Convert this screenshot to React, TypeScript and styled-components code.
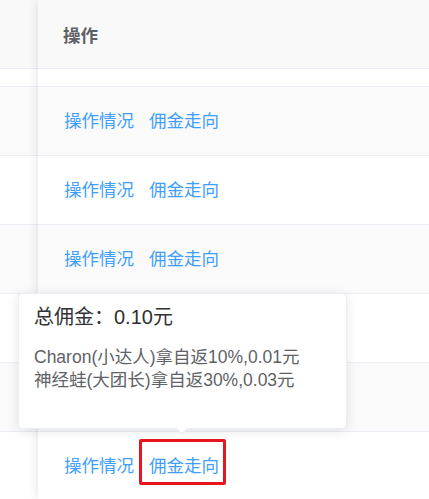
import React from "react";
import styled, { createGlobalStyle } from "styled-components";

const GlobalStyle = createGlobalStyle`
    body {
        margin: 0;
        background: #fff;
        font-family: "Liberation Sans", "Noto Sans CJK SC", sans-serif;
        overflow: hidden;
    }
`;

const TableBox = styled.div`
    display: flex;
    height: 499px;
    position: relative;
    overflow: hidden;
`;

const Pane = styled.div<{ fixed?: boolean }>`
    display: flex;
    flex-direction: column;
    width: ${p => p.fixed ? "auto" : "38px"};
    flex: ${p => p.fixed ? "1" : "none"};
    background: #fff;
    position: relative;
    z-index: ${p => p.fixed ? 1 : 0};
    box-shadow: ${p => p.fixed ? "0 0 10px rgba(0, 0, 0, 0.12)" : "none"};
`;

const HeadCell = styled.div`
    height: 68px;
    flex: none;
    display: flex;
    align-items: center;
    padding-left: 25px;
    background: #f9f9fa;
    border-bottom: 1px solid #e6ebf5;
    font-size: 17.5px;
    font-weight: bold;
    color: #5e6166;
`;

const GapRow = styled.div`
    height: 17px;
    flex: none;
    border-bottom: 1px solid #ebeef5;
`;

const Row = styled.div<{ striped?: boolean }>`
    height: 68px;
    flex: none;
    display: flex;
    align-items: center;
    padding-left: 26px;
    background: ${p => p.striped ? "#fafafa" : "#fff"};
    border-bottom: 1px solid #ebeef5;
`;

const LinkButton = styled.span<{ marked?: boolean }>`
    position: relative;
    font-size: 17.5px;
    line-height: 24px;
    color: #409eff;
    cursor: pointer;
    & + & {
        margin-left: 15px;
    }
    &::after {
        content: "";
        display: ${p => p.marked ? "block" : "none"};
        position: absolute;
        left: -10px;
        right: -7px;
        top: -15px;
        bottom: -7px;
        border: 3px solid #e8141f;
        border-radius: 2px;
    }
`;

const Popover = styled.div`
    position: absolute;
    left: 18px;
    top: 293px;
    width: 297px;
    height: 104px;
    padding: 10px 15px 20px 15px;
    background: #fff;
    border: 1px solid #ebeef5;
    border-radius: 4px;
    box-shadow: 0 2px 12px rgba(0, 0, 0, 0.1);
    z-index: 5;
    &::before {
        content: "";
        position: absolute;
        left: 157px;
        bottom: -7px;
        border-width: 6px 6px 0 6px;
        border-style: solid;
        border-color: #ebeef5 transparent transparent transparent;
    }
    &::after {
        content: "";
        position: absolute;
        left: 158px;
        bottom: -5px;
        border-width: 5px 5px 0 5px;
        border-style: solid;
        border-color: #fff transparent transparent transparent;
    }
`;

const PopTitle = styled.div`
    font-size: 20px;
    line-height: 26px;
    color: #303133;
    margin-bottom: 16px;
`;

const PopLine = styled.div`
    font-size: 17.5px;
    line-height: 23px;
    color: #606266;
`;

const rowCount = 6;

export default function App() {
    const leftRows = [];
    const fixedRows = [];
    for (let i = 0; i < rowCount; i++) {
        leftRows.push(<Row key={"l" + i} striped={i % 2 === 0} />);
        fixedRows.push(<Row key={"f" + i} striped={i % 2 === 0}>
            <LinkButton>操作情况</LinkButton>
            <LinkButton marked={i === rowCount - 1}>佣金走向</LinkButton>
        </Row>);
    }
    return <>
        <GlobalStyle />
        <TableBox>
            <Pane>
                <HeadCell />
                <GapRow />
                {leftRows}
            </Pane>
            <Pane fixed>
                <HeadCell>操作</HeadCell>
                <GapRow />
                {fixedRows}
            </Pane>
            <Popover>
                <PopTitle>总佣金：0.10元</PopTitle>
                <PopLine>Charon(小达人)拿自返10%,0.01元</PopLine>
                <PopLine>神经蛙(大团长)拿自返30%,0.03元</PopLine>
            </Popover>
        </TableBox>
    </>;
}
